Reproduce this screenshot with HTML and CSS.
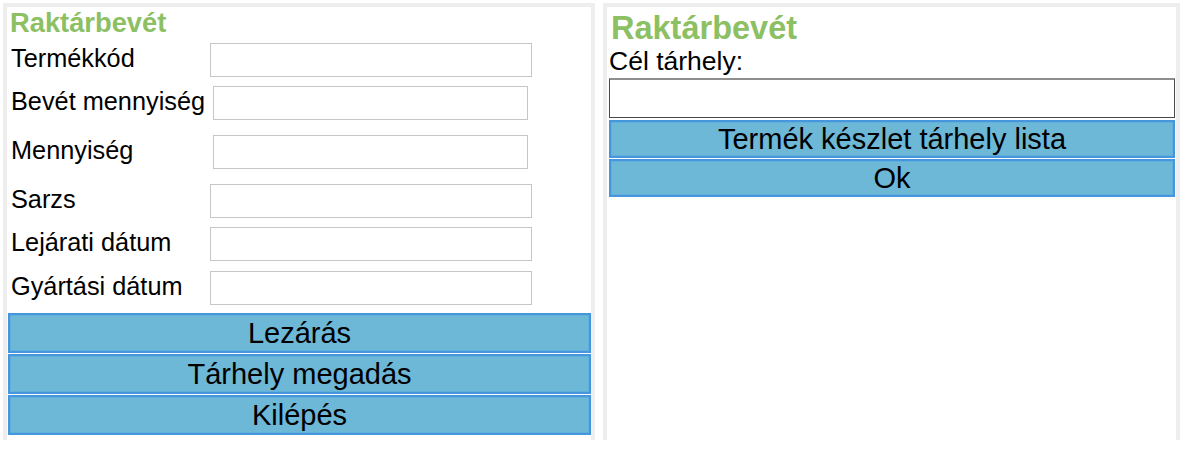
FILE: index.html
```html
<!DOCTYPE html>
<html lang="hu">
<head>
<meta charset="utf-8">
<title>Raktárbevét</title>
<link rel="stylesheet" href="styles.css">
</head>
<body>
<div class="screens">
  <section class="panel panel-left">
    <h1 class="title">Raktárbevét</h1>
    <div class="form">
      <div class="row row-a"><label class="label">Termékkód</label><input class="field" type="text"></div>
      <div class="row row-b narrow"><label class="label">Bevét mennyiség</label><input class="field" type="text"></div>
      <div class="row row-b narrow"><label class="label">Mennyiség</label><input class="field" type="text"></div>
      <div class="row row-a"><label class="label">Sarzs</label><input class="field" type="text"></div>
      <div class="row row-d"><label class="label">Lejárati dátum</label><input class="field" type="text"></div>
      <div class="row row-last"><label class="label">Gyártási dátum</label><input class="field" type="text"></div>
    </div>
    <div class="buttons">
      <button class="btn">Lezárás</button>
      <button class="btn">Tárhely megadás</button>
      <button class="btn">Kilépés</button>
    </div>
  </section>
  <section class="panel panel-right">
    <h1 class="title title-big">Raktárbevét</h1>
    <label class="label-top">Cél tárhely:</label>
    <input class="field-big" type="text">
    <div class="buttons buttons-right">
      <button class="btn btn-right">Termék készlet tárhely lista</button>
      <button class="btn btn-right">Ok</button>
    </div>
  </section>
</div>
</body>
</html>
```
FILE: styles.css
```css
* { box-sizing: border-box; }
html, body { background: #ffffff; }
body {
  margin: 3px;
  font-family: "Liberation Sans", Arial, sans-serif;
  color: #000;
}
.screens {
  display: flex;
  gap: 8px;
  align-items: flex-start;
}
.panel {
  border: 4px solid #eeeeee;
  border-bottom: none;
  height: 437px;
  display: flex;
  flex-direction: column;
}
.panel-left { width: 592px; padding-left: 1px; }
.panel-right { width: 577px; padding: 3px 1px 0 2px; }

.title {
  margin: 0;
  padding-left: 2px;
  font-size: 27.3px;
  font-weight: bold;
  color: #8cc063;
  line-height: 31px;
}
.title-big { font-size: 32.5px; padding-left: 2px; line-height: 36px; }

.form {
  margin-top: 5px;
  padding-left: 3px;
  display: flex;
  flex-direction: column;
}
.row {
  display: flex;
  align-items: center;
  height: 34px;
}
.row-a { margin-bottom: 9px; }
.row-b { margin-bottom: 15px; }
.row-d { margin-bottom: 10px; }
.row-last { margin-bottom: 8px; }
.label {
  width: 199px;
  font-size: 25.3px;
  padding-bottom: 3px;
  white-space: nowrap;
}
.field {
  width: 322px;
  height: 34px;
  border: 1px solid #c6c6c6;
  background: #fff;
  margin: 0;
  padding: 0 4px;
  font-size: 20px;
}
.narrow .field { margin-left: 3px; width: 315px; }

.buttons {
  display: flex;
  flex-direction: column;
  gap: 1px;
}
.btn {
  display: block;
  width: 583px;
  height: 40px;
  margin: 0;
  padding: 0;
  background: #6db7d7;
  border: 2px solid #4596dc;
  box-shadow: inset 0 0 0 1px #5fb0db;
  font-family: "Liberation Sans", Arial, sans-serif;
  font-size: 29px;
  color: #000;
  text-align: center;
  line-height: 34px;
}

.label-top {
  display: block;
  font-size: 26.5px;
  margin-top: 0;
  line-height: 30px;
}
.field-big {
  display: block;
  width: 566px;
  height: 40px;
  margin: 2px 0 2px 0;
  border: 1px solid #4a4a4a;
  border-top: 2px solid #8e8e8e;
  background: #fff;
  padding: 0 4px;
  font-size: 22px;
}
.btn-right {
  width: 566px;
  height: 38px;
  line-height: 32px;
}
```
